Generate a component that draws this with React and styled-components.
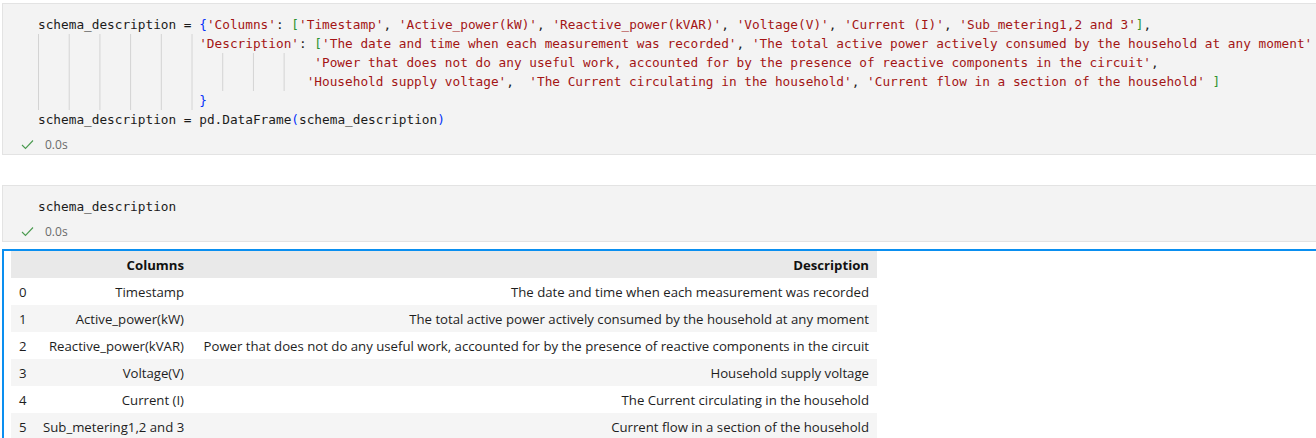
import React from "react";
import styled, { createGlobalStyle } from "styled-components";

const Global = createGlobalStyle`
  html, body { margin: 0; padding: 0; background: #ffffff; }
  body { font-family: "Open Sans", "Noto Sans", sans-serif; overflow: hidden; }
`;

const Notebook = styled.div`
  width: 1316px;
  height: 438px;
  overflow: hidden;
  padding: 3px 0 0 2px;
  box-sizing: border-box;
`;

const Cell = styled.section`
  background: #f3f3f3;
  border: 1px solid #e3e3e3;
  border-right: none;
  margin-bottom: ${(p) => p.$gap}px;
`;

const Code = styled.div`
  padding: 11px 0 0 35px;
  font-family: "DejaVu Sans Mono", "Liberation Mono", monospace;
  font-size: 12.75px;
  color: #1b1b1b;
  white-space: pre;
  overflow: hidden;
`;

const Line = styled.div`
  display: flex;
  height: 19px;
  line-height: 19px;
`;

const Indent = styled.span`
  flex: none;
  width: ${(p) => p.$n}ch;
  align-self: stretch;
  background-image: linear-gradient(90deg, #d3d3d3 0 1px, transparent 1px);
  background-size: 4ch 100%;
  background-repeat: repeat-x;
`;

const Str = styled.span`
  color: #a31515;
`;

const Br = styled.span`
  color: ${(p) => p.$c};
`;

const Status = styled.div`
  margin-top: 5px;
  height: 20px;
  display: flex;
  align-items: center;
  padding-left: 18px;
  gap: 11px;
  font-size: 12px;
  color: #6b6b6b;
`;

const Output = styled.div`
  border-top: 2px solid #0a8ff0;
  border-left: 2px solid #0a8ff0;
  padding-left: 7px;
  margin-top: 7px;
`;

const Table = styled.table`
  border-collapse: collapse;
  table-layout: fixed;
  width: 866px;
  font-family: "Open Sans", "Noto Sans", sans-serif;
  font-size: 13.2px;
  color: #1e1e1e;
`;

const Th = styled.th`
  height: 27px;
  padding: 0 8px;
  text-align: right;
  font-weight: 700;
  background: #e9e9e9;
  white-space: nowrap;
  color: #111;
`;

const Tr = styled.tr`
  background: ${(p) => (p.$odd ? "#f5f5f5" : "#ffffff")};
`;

const Td = styled.td`
  height: 27px;
  padding: 0 8px;
  text-align: ${(p) => (p.$left ? "left" : "right")};
  white-space: nowrap;
  overflow: visible;
`;

const Check = () => (
  <svg width="13" height="11" viewBox="0 0 13 11">
    <polyline points="1,6 4.5,9.5 12,1.5" fill="none" stroke="#4a9a4f" strokeWidth="1.1" />
  </svg>
);

const B1 = "#0431fa";
const B2 = "#319331";

const rows = [
  ["Timestamp", "The date and time when each measurement was recorded"],
  ["Active_power(kW)", "The total active power actively consumed by the household at any moment"],
  ["Reactive_power(kVAR)", "Power that does not do any useful work, accounted for by the presence of reactive components in the circuit"],
  ["Voltage(V)", "Household supply voltage"],
  ["Current (I)", "The Current circulating in the household"],
  ["Sub_metering1,2 and 3", "Current flow in a section of the household"],
];

export default function App() {
  return (
    <>
      <Global />
      <Notebook>
        <Cell $gap={30}>
          <Code>
            <Line>
              <span>
                schema_description = <Br $c={B1}>{"{"}</Br>
                <Str>'Columns'</Str>: <Br $c={B2}>[</Br>
                <Str>'Timestamp'</Str>, <Str>'Active_power(kW)'</Str>, <Str>'Reactive_power(kVAR)'</Str>,{" "}
                <Str>'Voltage(V)'</Str>, <Str>'Current (I)'</Str>, <Str>'Sub_metering1,2 and 3'</Str>
                <Br $c={B2}>]</Br>,
              </span>
            </Line>
            <Line>
              <Indent $n={21} />
              <span>
                <Str>'Description'</Str>: <Br $c={B2}>[</Br>
                <Str>'The date and time when each measurement was recorded'</Str>,{" "}
                <Str>'The total active power actively consumed by the household at any moment'</Str>
              </span>
            </Line>
            <Line>
              <Indent $n={36} />
              <span>
                <Str>'Power that does not do any useful work, accounted for by the presence of reactive components in the circuit'</Str>,
              </span>
            </Line>
            <Line>
              <Indent $n={35} />
              <span>
                <Str>'Household supply voltage'</Str>,{"  "}
                <Str>'The Current circulating in the household'</Str>,{" "}
                <Str>'Current flow in a section of the household'</Str> <Br $c={B2}>]</Br>
              </span>
            </Line>
            <Line>
              <Indent $n={21} />
              <span>
                <Br $c={B1}>{"}"}</Br>
              </span>
            </Line>
            <Line>
              <span>
                schema_description = pd.DataFrame<Br $c={B1}>(</Br>schema_description<Br $c={B1}>)</Br>
              </span>
            </Line>
          </Code>
          <Status>
            <Check />
            <span>0.0s</span>
          </Status>
        </Cell>
        <Cell $gap={0}>
          <Code>
            <Line>
              <span>schema_description</span>
            </Line>
          </Code>
          <Status>
            <Check />
            <span>0.0s</span>
          </Status>
        </Cell>
        <Output>
          <Table>
            <colgroup>
              <col style={{ width: 24 }} />
              <col style={{ width: 157 }} />
              <col style={{ width: 685 }} />
            </colgroup>
            <thead>
              <tr>
                <Th />
                <Th>Columns</Th>
                <Th>Description</Th>
              </tr>
            </thead>
            <tbody>
              {rows.map((r, i) => (
                <Tr key={i} $odd={i % 2 === 1}>
                  <Td $left>{i}</Td>
                  <Td>{r[0]}</Td>
                  <Td>{r[1]}</Td>
                </Tr>
              ))}
            </tbody>
          </Table>
        </Output>
      </Notebook>
    </>
  );
}
